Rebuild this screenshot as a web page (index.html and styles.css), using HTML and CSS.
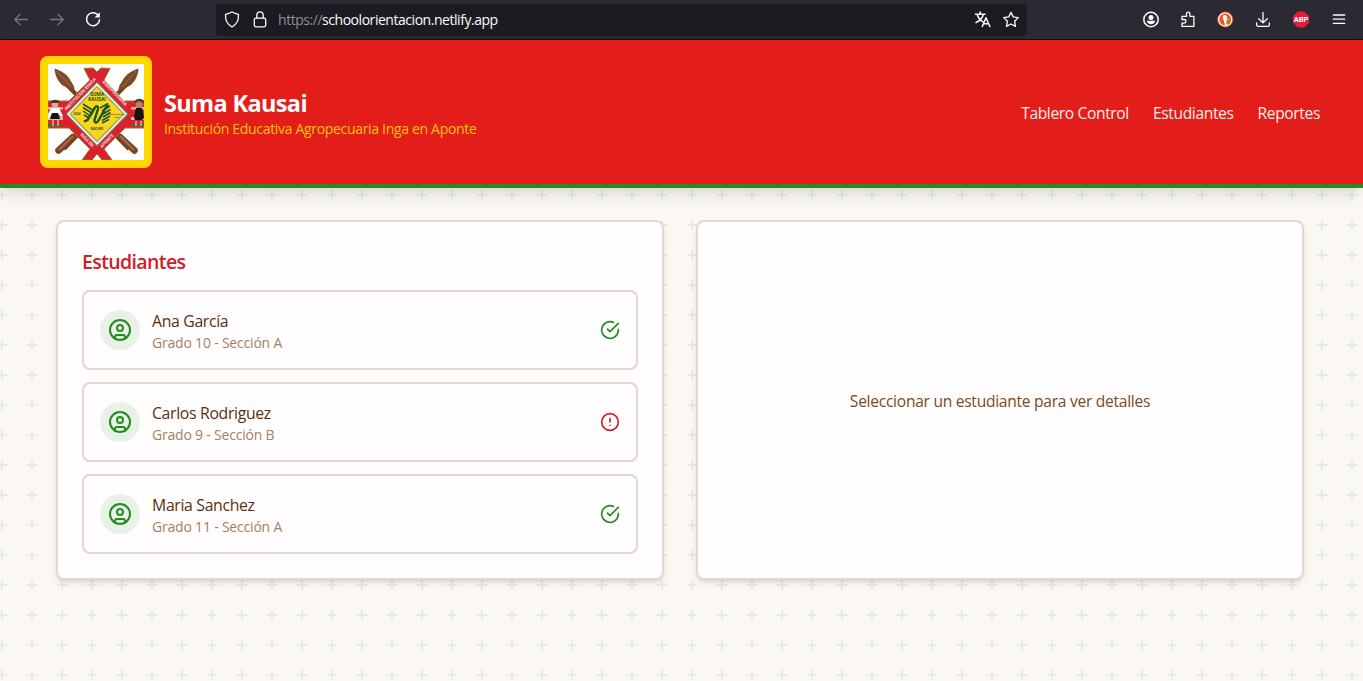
FILE: index.html
```html
<!DOCTYPE html>
<html lang="es">
<head>
<meta charset="utf-8">
<title>Suma Kausai</title>
<link rel="stylesheet" href="styles.css">
</head>
<body>
<div class="toolbar">
  <div class="nav-buttons">
    <svg class="ic dim" viewBox="0 0 16 16"><path d="M14.500 7.500H2M7 2.300 1.800 7.500 7 12.700"/></svg>
    <svg class="ic dim" viewBox="0 0 16 16"><path d="M1.500 7.500H14M9 2.300 14.200 7.500 9 12.700"/></svg>
    <svg class="ic" viewBox="0 0 16 16"><path d="M12.800 2.800A6.500 6.500 0 1 0 14.500 7.700" stroke-width="1.500"/><path d="M14.800.2v5.300H9.500z" fill="currentColor" stroke="none"/></svg>
  </div>
  <div class="address">
    <svg class="ic" viewBox="0 0 16 16"><path d="M8 0 14.500 2.600C14.800 8 12.600 12.500 8 15 3.400 12.500 1.200 8 1.500 2.600z"/></svg>
    <svg class="ic lock" viewBox="0 0 16 16"><rect x="2.300" y="6.200" width="11.400" height="8.600" rx="1.500"/><path d="M4.800 6V3a3.200 3.200 0 0 1 6.400 0V6"/></svg>
    <span class="url">https://<b>schoolorientacion.netlify.app</b></span>
    <svg class="ic translate" viewBox="0 0 16 16"><path d="M.5 2.300h9.500M5.200 0v2.300M8.300 2.500C7.500 6 4.500 9 1 10.500M2.300 2.500C3 5.500 5 8.200 8 9.800M7.300 14.500l3.700-8.800 3.900 8.800M8.700 11.800h4.800" stroke-width="1.500"/></svg>
    <svg class="ic" viewBox="0 0 16 16"><path d="M8 .4 10.200 4.900 15.300 5.600 11.600 9.200 12.500 14.400 8 12 3.500 14.400 4.400 9.200.7 5.600 5.800 4.900z"/></svg>
  </div>
  <div class="tools">
    <svg class="ic" viewBox="0 0 16 16"><circle cx="8" cy="7.500" r="7.200" stroke-width="1.500"/><circle cx="8" cy="5.400" r="2.500" fill="currentColor" stroke="none"/><path d="M3.800 8.800h8.400c-.3 2.300-2 3.500-4.200 3.500s-3.900-1.200-4.200-3.500z" fill="currentColor" stroke="none"/></svg>
    <svg class="ic" viewBox="0 0 16 16"><path d="M1 5.700V4.300H5.500V1.900a1.700 1.700 0 0 1 3.400 0v2.400H12.900V14.300H1v-3.200h2.200a1.800 1.800 0 0 0 0-3.600H1z"/></svg>
    <svg class="ic" viewBox="0 0 16 16"><circle cx="7.200" cy="7.500" r="7.900" fill="#e8542b" stroke="none"/><circle cx="7.200" cy="7.500" r="6.500" stroke="#fff" stroke-width="1.200"/><path d="M4.800 3.900C5.900 2.300 8.700 2.700 9.300 5L8.700 7.700l.7 5.500-2.400.3C6.700 10 4.600 6.900 4.800 3.900z" fill="#fff" stroke="none"/><path d="M8 6.500h3.300V8H8z" fill="#fdb12b" stroke="none"/><path d="M8.100 9.700l3.700-.4V12l-3.300.6z" fill="#65a83b" stroke="none"/></svg>
    <svg class="ic" viewBox="0 0 16 16"><path d="M7 .3v10.400M2.700 6.700 7 10.900l4.300-4.200M.6 11v1.700a1.700 1.700 0 0 0 1.700 1.700h9.400a1.700 1.700 0 0 0 1.700-1.700V11"/></svg>
    <svg class="ic" viewBox="0 0 16 16"><path d="M4.700-.5h6.600L16 4.200v6.600L11.300 15.500H4.700L0 10.800V4.200z" fill="#e51c40" stroke="none"/><text class="abp" x="8" y="10.200">ABP</text></svg>
    <svg class="ic" viewBox="0 0 16 16"><path d="M2.300 3h11.400M2.300 7.200h11.400M2.300 11.400h11.400"/></svg>
  </div>
</div>

<div class="page">
  <header class="header">
    <div class="brand">
      <div class="logo">
        <svg viewBox="0 0 96 96">
          <rect width="96" height="96" fill="#fff"/>
          <g id="lance">
            <path d="M18 20 81 85" stroke="#70401f" stroke-width="4"/>
            <path d="M6.500 4.500C12 6 17 9 21 14L25.500 21.500 27 27 21.500 25 14 21C9 16 7 11 6.500 4.500z" fill="#7d4a28"/>
            <path d="M9 7 23 23" stroke="#a36b42" stroke-width="1"/>
            <path d="M72 73 86.500 86.500" stroke="#7a4423" stroke-width="6.500" stroke-linecap="round"/>
            <path d="M72 72 86 86" stroke="#a86b45" stroke-width="2"/>
          </g>
          <use href="#lance" transform="matrix(-1 0 0 1 97 0)"/>
          <path d="M36 4.500 45 4 49 8 53 4 62 4.500 56 16 76 37H96V64H77L56 85 64 96 54 96 49 90 44 96 34 96 42 85 21 64H0V37H21L42 16z" fill="#df1f2d" stroke="#7d7c34" stroke-width="1"/>
          <path d="M49 17.500 80.500 50 49 82.500 17.500 50z" fill="#4f9354"/>
          <path d="M49 19 79 50 49 81 19 50z" fill="#fff"/>
          <path d="M49 21.500 76.500 50 49 78.500 21.500 50z" fill="none" stroke="#c9705f" stroke-width=".8"/>
          <path d="M49 23 75.500 50 49 77 22.500 50z" fill="#fbd51b" stroke="#5b8d3b" stroke-width=".8"/>
          <g fill="none" stroke="#18552a">
            <path d="M35 40 46 47M35 43.500 45 50M35 47 43 52.500M36 51 41 54M52 44 60 39.500M54 47 62 42M55 50 62.500 45.500M55 53 62.500 48.500M54 56.500 62 52M54 59 61 55.500" stroke-width="1.500"/>
            <path d="M36 57.500 39.500 56 47 43.500C49 41 50.500 42.500 50 45L46.500 56C46.500 59.500 49 59 50.500 56.500L57 45 60 40.500" stroke-width="2.400"/>
          </g>
          <g class="crest-text" fill="#285322">
            <text x="49" y="32">SUMA</text><text x="49" y="37">KAUSAI</text>
            <text x="49" y="66" class="small">NACHIRI</text><text x="29" y="51" class="small">IUIAI</text><text x="69" y="50.500" class="tiny">PARUNAKUNA</text><text x="69" y="54" class="tiny">SUG</text>
          </g>
          <g class="crest-band" fill="#fff">
            <text transform="translate(33.500 31) rotate(-46)">INSTITUCION EDUCA</text>
            <text transform="translate(65.500 30) rotate(46)">AGROPECUARIA</text>
            <text transform="translate(38 77) rotate(46)">INGA EN</text>
            <text transform="translate(60 78) rotate(-46)">APONTE</text>
          </g>
          <path d="M0 60h13v2H0zM84 60h12v2H84z" fill="#28783b"/><path d="M0 43h15v2.500H0zM0 53h15v3H0zM83 43h13v2.500H83zM83 53h13v3H83z" fill="#e5b7a4"/>
          <circle cx="7" cy="40.500" r="3.300" fill="#d7ad91"/><path d="M2 38c3-3 8-3 10 0l-3 1H4z" fill="#54351f"/><path d="M3 44h8l4 8-2 1-3-3H4l-3 5H0v-5z" fill="#fff"/><path d="M4 49h6l2 6H2z" fill="#151414"/><path d="M5 55v7M10 55v7" stroke="#e0b292" stroke-width="1.500"/>
          <circle cx="91" cy="41" r="3.300" fill="#b88164"/><path d="M87 38c2-3 6-3 9 0" stroke="#54351f" stroke-width="2" fill="none"/><path d="M88 44h6l2 10-2 2h-7l-1-3z" fill="#151414"/><path d="M88 57v5M93 57v5" stroke="#e0b292" stroke-width="1.500"/>
        </svg>
      </div>
      <div>
        <h1 class="title">Suma Kausai</h1>
        <p class="subtitle">Institución Educativa Agropecuaria Inga en Aponte</p>
      </div>
    </div>
    <nav class="menu"><a>Tablero Control</a><a>Estudiantes</a><a>Reportes</a></nav>
  </header>

  <main class="main">
    <section class="card">
      <h2 class="card-title">Estudiantes</h2>
      <div class="list">
        <div class="student">
          <div class="avatar"><svg class="lu" viewBox="0 0 24 24"><circle cx="12" cy="12" r="10"/><circle cx="12" cy="10" r="3"/><path d="M7 20.662V19a2 2 0 0 1 2-2h6a2 2 0 0 1 2 2v1.662"/></svg></div>
          <div class="info"><div class="name">Ana García</div><div class="grade">Grado 10 - Sección A</div></div>
          <svg class="status ok" viewBox="0 0 24 24"><path d="M22 11.080V12a10 10 0 1 1-5.930-9.140"/><path d="m9 11 3 3L22 4"/></svg>
        </div>
        <div class="student">
          <div class="avatar"><svg class="lu" viewBox="0 0 24 24"><circle cx="12" cy="12" r="10"/><circle cx="12" cy="10" r="3"/><path d="M7 20.662V19a2 2 0 0 1 2-2h6a2 2 0 0 1 2 2v1.662"/></svg></div>
          <div class="info"><div class="name">Carlos Rodriguez</div><div class="grade">Grado 9 - Sección B</div></div>
          <svg class="status bad" viewBox="0 0 24 24"><circle cx="12" cy="12" r="10"/><path d="M12 8v4M12 16h.01"/></svg>
        </div>
        <div class="student">
          <div class="avatar"><svg class="lu" viewBox="0 0 24 24"><circle cx="12" cy="12" r="10"/><circle cx="12" cy="10" r="3"/><path d="M7 20.662V19a2 2 0 0 1 2-2h6a2 2 0 0 1 2 2v1.662"/></svg></div>
          <div class="info"><div class="name">Maria Sanchez</div><div class="grade">Grado 11 - Sección A</div></div>
          <svg class="status ok" viewBox="0 0 24 24"><path d="M22 11.080V12a10 10 0 1 1-5.930-9.140"/><path d="m9 11 3 3L22 4"/></svg>
        </div>
      </div>
    </section>
    <section class="card details"><p class="empty">Seleccionar un estudiante para ver detalles</p></section>
  </main>
</div>
</body>
</html>
```
FILE: styles.css
```css
* { box-sizing: border-box; margin: 0; }
body { font-family: "Open Sans", "Noto Sans", sans-serif; height: 681px; overflow: hidden; display: flex; flex-direction: column; }
svg { display: block; }

.toolbar { height: 40px; flex: none; background: #2b2a33; border-bottom: 1px solid #0c0c0d; display: flex; align-items: center; justify-content: space-between; padding: 0 16px 0 13px; color: #fbfbfe; }
.ic { width: 16px; height: 16px; flex: none; fill: none; stroke: currentColor; stroke-width: 1.3; stroke-linecap: round; stroke-linejoin: round; overflow: visible; }
.dim { color: #77767f; }
.nav-buttons { display: flex; gap: 20px; width: 203px; }
.address { width: 811px; height: 32px; border-radius: 4px; background: #1c1b22; display: flex; align-items: center; padding: 0 8px; gap: 12px; margin-right: auto; }
.url { font-size: 14px; line-height: 20px; letter-spacing: -0.46px; color: #8f8e95; flex: 1; white-space: nowrap; margin-left: -2px; padding-top: 1px; }
.url b { font-weight: 400; color: #fbfbfe; }
.tools { display: flex; gap: 21.600px; }
.abp { font: 700 7.500px Roboto, sans-serif; fill: #fff; stroke: none; text-anchor: middle; }

.page { flex: 1; background-color: #faf7f4; background-image: url("data:image/svg+xml,%3Csvg xmlns='http://www.w3.org/2000/svg' width='30' height='30'%3E%3Cpath d='M6 4V0H4v4H0v2h4v4h2V6h4V4z' fill='%23228b22' fill-opacity='.1'/%3E%3C/svg%3E"); background-position: -3px 0; }
.header { height: 148px; background: #e31e1a; border-bottom: 4px solid #228b22; padding: 16px 43px 16px 40px; display: flex; align-items: center; justify-content: space-between; box-shadow: 0 10px 15px -3px rgba(0,0,0,.1), 0 4px 6px -4px rgba(0,0,0,.1); }
.brand { display: flex; align-items: center; gap: 12px; }
.logo { width: 112px; height: 112px; padding: 8px; border-radius: 8px; background: #ffd700; }
.crest-text { font: 700 5px Roboto, sans-serif; text-anchor: middle; }
.small { font-size: 3.200px; }
.tiny { font-size: 2.500px; }
.crest-band { font: 700 4.500px Roboto, sans-serif; text-anchor: middle; opacity: .85; }
.title { font-size: 23.500px; line-height: 32px; font-weight: 700; color: #fff; letter-spacing: -0.65px; white-space: nowrap; padding-top: 2px; }
.subtitle { font-size: 14px; line-height: 20px; color: #ffd700; opacity: .9; letter-spacing: -0.32px; white-space: nowrap; }
.menu { display: flex; gap: 24px; font-size: 15.600px; line-height: 24px; color: #fdeceb; white-space: nowrap; letter-spacing: -0.37px; padding-top: 2px; }

.main { display: grid; grid-template-columns: 608px 608px; gap: 32px; padding: 32px 56px; }
.card { height: 360px; background: #fffdfd; border: 2px solid #e2d8d0; border-radius: 8px; padding: 24px; box-shadow: 0 4px 6px -1px rgba(0,0,0,.1), 0 2px 4px -2px rgba(0,0,0,.1); }
.card-title { font-size: 19.500px; line-height: 28px; font-weight: 600; color: #cd2027; letter-spacing: -0.62px; padding-top: 2px; margin-bottom: 14px; }
.list { display: grid; gap: 12px; }
.student { height: 80px; border: 2px solid #e2d8d0; border-radius: 8px; padding: 16px; display: flex; align-items: center; gap: 12px; }
.avatar { width: 40px; height: 40px; border-radius: 50%; background: #e8f2e7; display: grid; place-items: center; }
.lu { width: 24px; height: 24px; fill: none; stroke: #228b22; stroke-width: 2; stroke-linecap: round; }
.info { flex: 1; white-space: nowrap; padding-top: 1px; }
.name { font-size: 15.800px; line-height: 24px; color: #5c2f0c; letter-spacing: -0.33px; }
.grade { font-size: 14px; line-height: 20px; color: #a57f62; letter-spacing: -0.2px; }
.status { width: 20px; height: 20px; fill: none; stroke-width: 2; stroke-linecap: round; stroke-linejoin: round; }
.ok { stroke: #228b22; }
.bad { stroke: #cd2027; }
.details { display: grid; place-items: center; }
.empty { font-size: 15.600px; line-height: 24px; color: #7a4a22; letter-spacing: -0.28px; white-space: nowrap; padding-top: 2px; }
```
